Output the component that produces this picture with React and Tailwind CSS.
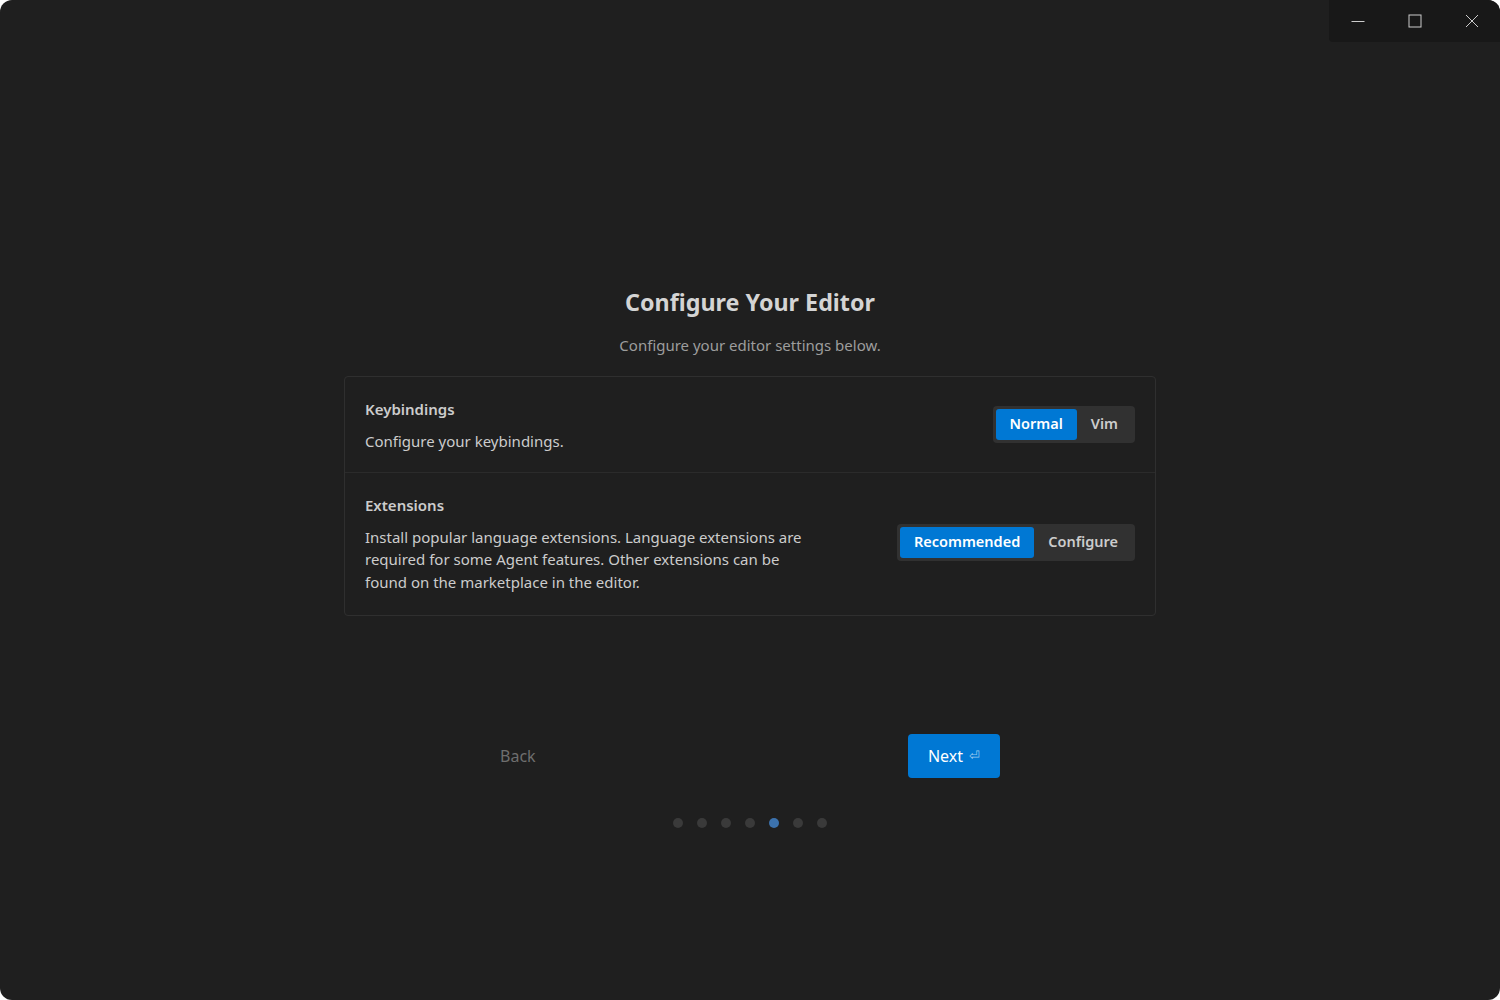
function Segmented({ options, active }) {
  return (
    <div className="flex items-center rounded-[4px] bg-[#313131] p-[3px]">
      {options.map((opt) => (
        <button
          key={opt}
          className={
            opt === active
              ? 'h-[31px] rounded-[3px] bg-[#0078d4] px-[14px] text-[14.5px] font-semibold text-white'
              : 'h-[31px] rounded-[3px] px-[14px] text-[14.5px] font-semibold text-[#cccccc]'
          }
        >
          {opt}
        </button>
      ))}
    </div>
  )
}

function SettingRow({ title, children, control, last }) {
  return (
    <div
      className={
        last
          ? 'flex items-center justify-between px-5 pt-[19px] pb-[22px]'
          : 'flex items-center justify-between border-b border-[#2b2b2b] px-5 pt-[19px] pb-[19px]'
      }
    >
      <div>
        <div className="text-[15px] font-semibold leading-[26px] text-[#cccccc]">{title}</div>
        <div className="mt-[8px] max-w-[450px] text-[15px] leading-[22.5px] text-[#cccccc]">{children}</div>
      </div>
      <div>{control}</div>
    </div>
  )
}

export default function App() {
  return (
    <div className="h-[1000px] w-[1500px] bg-white" style={{ fontFamily: '"Noto Sans", "Open Sans", sans-serif' }}>
      <div className="relative flex h-full flex-col items-center overflow-hidden rounded-[12px] bg-[#1f1f1f]">
        {/* window controls */}
        <div className="absolute right-0 top-0 flex h-[42px] items-stretch rounded-bl-[4px] bg-[#181818] text-[#cccccc]">
          <div className="flex w-[57px] items-center justify-center">
            <svg width="14" height="14" viewBox="0 0 14 14" fill="none" stroke="currentColor" strokeWidth="1">
              <path d="M0.5 7.5h13" />
            </svg>
          </div>
          <div className="flex w-[57px] items-center justify-center">
            <svg width="14" height="14" viewBox="0 0 14 14" fill="none" stroke="currentColor" strokeWidth="1">
              <rect x="1" y="1" width="12" height="12" />
            </svg>
          </div>
          <div className="flex w-[57px] items-center justify-center">
            <svg width="14" height="14" viewBox="0 0 14 14" fill="none" stroke="currentColor" strokeWidth="1">
              <path d="M1 1l12 12M13 1L1 13" />
            </svg>
          </div>
        </div>

        <h1 className="mt-[286px] text-[23.3px] font-bold leading-[32px] text-[#d4d4d4]">Configure Your Editor</h1>
        <p className="mt-[17px] text-[15px] leading-[20px] text-[#9d9d9d]">Configure your editor settings below.</p>

        <div className="mt-[21px] w-[812px] rounded-[4px] border border-[#2f2f2f]">
          <SettingRow title="Keybindings" control={<Segmented options={['Normal', 'Vim']} active="Normal" />}>
            Configure your keybindings.
          </SettingRow>
          <SettingRow
            title="Extensions"
            last
            control={<Segmented options={['Recommended', 'Configure']} active="Recommended" />}
          >
            Install popular language extensions. Language extensions are required for some Agent features. Other extensions can be found on the marketplace in the editor.
          </SettingRow>
        </div>

        <div className="mt-[118px] flex w-[500px] items-center justify-between">
          <button className="text-[16px] text-[#6e6e6e]">Back</button>
          <button className="flex h-[44px] w-[92px] items-center justify-center gap-[6px] rounded-[4px] bg-[#0078d4] text-[16px] text-white">
            Next <span className="text-[13px] text-[#9cc9ee]">⏎</span>
          </button>
        </div>

        <div className="mt-[40px] flex items-center gap-[14px]">
          {[0, 1, 2, 3, 4, 5, 6].map((i) => (
            <div
              key={i}
              className={i === 4 ? 'h-[10px] w-[10px] rounded-full bg-[#3c72ad]' : 'h-[10px] w-[10px] rounded-full bg-[#3a3a3a]'}
            />
          ))}
        </div>
      </div>
    </div>
  )
}
